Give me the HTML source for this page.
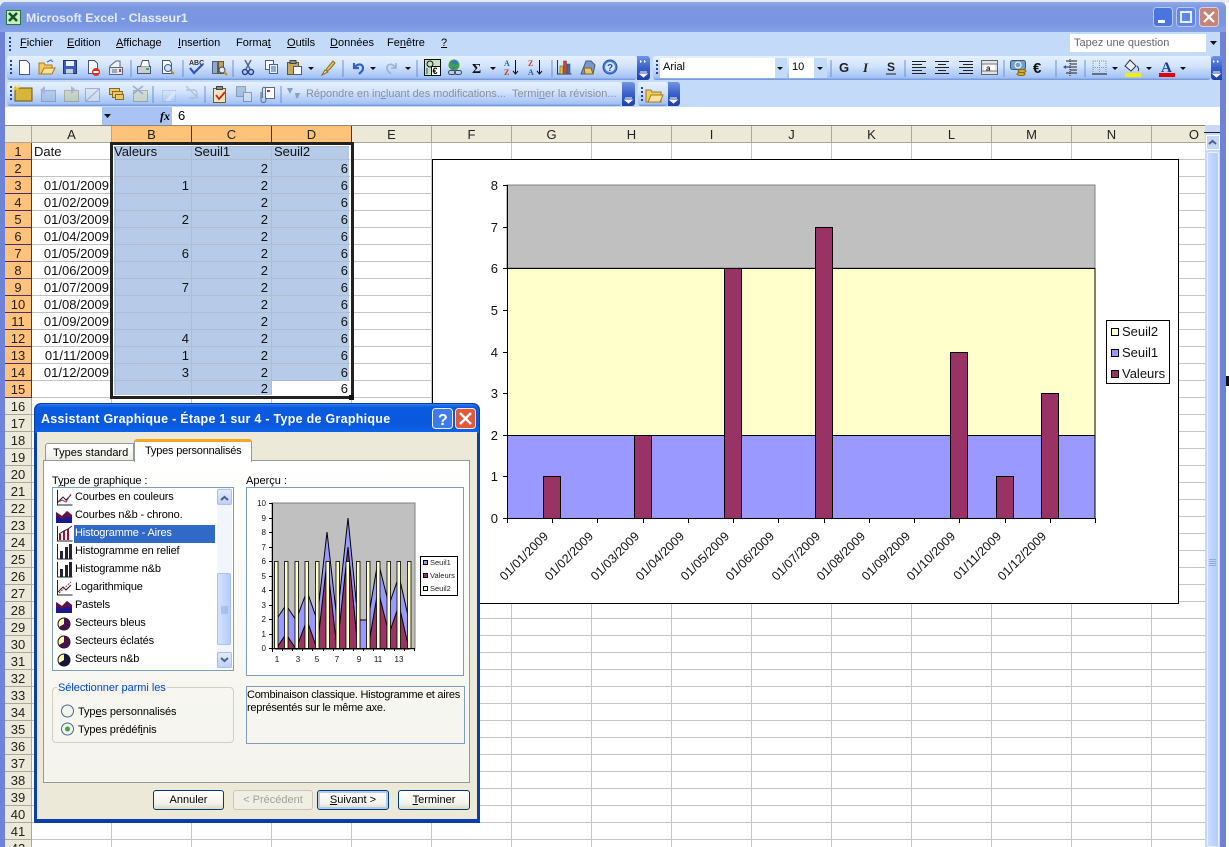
<!DOCTYPE html>
<html lang="fr"><head><meta charset="utf-8"><title>Microsoft Excel - Classeur1</title>
<style>
html,body{margin:0;padding:0;background:#fff}
#p{position:relative;width:1229px;height:847px;overflow:hidden;background:#fff;font:11px "Liberation Sans",sans-serif;color:#000}
#p div,#p span.a{position:absolute}
u{text-decoration:underline}
.t{position:absolute;white-space:nowrap;line-height:14px}
.tb{position:absolute;height:24px;background:linear-gradient(#e6f0fe,#d3e4fc 40%,#a3c2f5 90%,#6f8fd8);border-radius:3px}
.ov{background:linear-gradient(#7094e6,#3a60c8 50%,#1f3fa8)}
.h{background:#ece9d8;border-right:1px solid #aca899;border-bottom:1px solid #aca899;text-align:center;font-size:13px;line-height:17px;box-sizing:border-box;color:#222}
.ch{top:126px;height:17px;width:80px}
.rh{left:5px;width:27px;height:17px}
.s{background:#ffc27a;border-color:#4b2d6e}
.c{font-size:13px;line-height:17px;height:17px;white-space:nowrap;color:#111}
.r{text-align:right;width:76px}
.d{left:32px;width:77px;text-align:right}
.b{left:112px;width:77px;text-align:right}
.x{left:192px}.y{left:272px}
.li{left:75px;font-size:11px;line-height:14px;white-space:nowrap;letter-spacing:-.15px}
.btn{position:absolute;top:790px;height:20px;box-sizing:border-box;border:1px solid #003c74;border-radius:3px;background:linear-gradient(#fff,#f3f2ea 70%,#dcd8c8);text-align:center;line-height:18px;font-size:11px}
</style></head><body><div id="p">

<!-- window chrome -->
<div style="left:0;top:0;width:1229px;height:3px;background:#e8eaf2"></div>
<div style="left:0;top:2px;width:1226px;height:30px;background:linear-gradient(#8fa8e8,#7a97e0 20%,#7996e2 70%,#86a1e6);border-radius:5px 5px 0 0"></div>
<div style="left:0;top:32px;width:1226px;height:815px;background:#6e83d8"></div>
<div style="left:5px;top:32px;width:1215px;height:75px;background:#c3daf9"></div>
<div class="t" style="left:26px;top:11px;color:#e4eafc;font-weight:bold;font-size:12.4px">Microsoft Excel - Classeur1</div>
<svg style="position:absolute;left:6px;top:10px" width="16" height="16"><rect x=".5" y=".5" width="14" height="14" fill="#cfe8c8" stroke="#1f7a35"/><path d="M3 3l8 8M11 3l-8 8" stroke="#0c5a1f" stroke-width="2.5"/></svg>
<svg style="position:absolute;left:1153px;top:6px" width="68" height="23">
<rect x=".5" y="1.500" width="19" height="19" rx="3" fill="#4a75dc" stroke="#b8c8f0"/><rect x="5" y="14" width="7" height="3" fill="#fff"/>
<rect x="23.500" y="1.500" width="19" height="19" rx="3" fill="#5f88e4" stroke="#b8c8f0"/><rect x="28" y="6" width="10" height="10" fill="none" stroke="#e8eeff" stroke-width="2"/>
<rect x="46.500" y="1.500" width="19" height="19" rx="3" fill="#c98478" stroke="#d8d0dc"/><path d="M51 6l10 10M61 6l-10 10" stroke="#fff" stroke-width="2.200"/>
</svg>

<!-- menu -->
<svg style="position:absolute;left:8px;top:36px" width="4" height="16"><path d="M1 1h2v2H1zM1 5h2v2H1zM1 9h2v2H1zM1 13h2v2H1z" fill="#27418f"/></svg>
<div class="t" style="left:20px;top:36px"><u>F</u>ichier</div>
<div class="t" style="left:67px;top:36px"><u>E</u>dition</div>
<div class="t" style="left:116px;top:36px"><u>A</u>ffichage</div>
<div class="t" style="left:178px;top:36px"><u>I</u>nsertion</div>
<div class="t" style="left:236px;top:36px">Forma<u>t</u></div>
<div class="t" style="left:287px;top:36px"><u>O</u>utils</div>
<div class="t" style="left:330px;top:36px"><u>D</u>onnées</div>
<div class="t" style="left:387px;top:36px">Fe<u>n</u>être</div>
<div class="t" style="left:441px;top:36px"><u>?</u></div>
<div style="left:1070px;top:34px;width:136px;height:18px;background:#fff"></div>
<div style="left:1207px;top:34px;width:12px;height:18px;background:#c3daf9"></div>
<div class="t" style="left:1074px;top:36px;color:#666">Tapez une question</div>
<svg style="position:absolute;left:1210px;top:41px" width="7" height="5"><path d="M0 0h7L3.500 4z" fill="#111"/></svg>

<!-- toolbars -->
<div class="tb" style="left:7px;top:56px;width:630px"></div>
<div class="ov" style="left:637px;top:56px;width:13px;height:24px;border-radius:0 3px 3px 0"></div>
<div class="tb" style="left:653px;top:56px;width:558px"></div>
<div class="ov" style="left:1211px;top:56px;width:11px;height:24px;border-radius:3px 0 0 3px"></div>
<div class="tb" style="left:7px;top:82px;width:615px"></div>
<div class="ov" style="left:622px;top:82px;width:13px;height:24px;border-radius:0 3px 3px 0"></div>
<div class="tb" style="left:638px;top:82px;width:30px"></div>
<div class="ov" style="left:668px;top:82px;width:12px;height:24px;border-radius:0 3px 3px 0"></div>

<div style="left:660px;top:58px;width:115px;height:20px;background:#fff"></div>
<div style="left:775px;top:58px;width:12px;height:20px;background:#c3daf9"></div>
<div style="left:789px;top:58px;width:25px;height:20px;background:#fff"></div>
<div style="left:814px;top:58px;width:13px;height:20px;background:#c3daf9"></div>
<div class="t" style="left:663px;top:60px">Arial</div>
<div class="t" style="left:792px;top:60px">10</div>
<div class="t" style="left:306px;top:87px;color:#8a8f9a;letter-spacing:-.05px">Répondre en in<u>c</u>luant des modifications...</div>
<div class="t" style="left:512px;top:87px;color:#8a8f9a">Termi<u>n</u>er la révision...</div>

<svg style="position:absolute;left:0;top:0" width="1229" height="110">
<!-- grips -->
<path d="M10 60h2v2h-2zM10 64h2v2h-2zM10 68h2v2h-2zM10 72h2v2h-2zM10 86h2v2h-2zM10 90h2v2h-2zM10 94h2v2h-2zM10 98h2v2h-2zM656 60h2v2h-2zM656 64h2v2h-2zM656 68h2v2h-2zM656 72h2v2h-2zM641 87h2v2h-2zM641 91h2v2h-2zM641 95h2v2h-2zM641 99h2v2h-2z" fill="#27418f"/>
<!-- separators -->
<path d="M131 60v17M183 60v17M233 60v17M343 60v17M417 60v17M552 60v17M831 60v17M905 60v17M1004 60v17M1056 60v17M1085 60v17M153 86v17M205 86v17M281 86v17" stroke="#6f8fd0"/>
<!-- overflow marks -->
<path d="M640 72h7M640 74l3.500 3 3.500-3zM1213 72h7M1213 74l3.500 3 3.500-3zM625 98h7M625 100l3.500 3 3.500-3zM670 98h7M670 100l3.500 3 3.500-3z" stroke="#fff" fill="#fff"/>
<path d="M640 60l2 1.500-2 1.500zM644 60l2 1.500-2 1.500zM1213 60l2 1.500-2 1.500zM1217 60l2 1.500-2 1.500z" fill="#fff"/>
<!-- dropdown arrows -->
<path d="M308 67h6l-3 3zM370 67h6l-3 3zM405 67h6l-3 3zM490 67h6l-3 3zM777 67h6l-3 3zM817 67h6l-3 3zM1112 67h6l-3 3zM1146 67h6l-3 3zM1180 67h6l-3 3z" fill="#111"/>
<!-- new -->
<path d="M19.500 60.500h7l3 3v11h-10z" fill="#fff" stroke="#46597c"/>
<!-- open -->
<path d="M39 63h5l1 2h7v9H39z" fill="#f5c860" stroke="#a8791c"/><path d="M41 74l3-6h11l-3 6z" fill="#fbe29a" stroke="#a8791c"/><path d="M47 62l4-2 2 2" fill="none" stroke="#3a6ab0"/>
<!-- save -->
<rect x="63.500" y="60.500" width="13" height="13" fill="#3a5fb8" stroke="#1d3580"/><rect x="66" y="61" width="8" height="5" fill="#e8eefa"/><rect x="66" y="69" width="7" height="4.500" fill="#c8cfdf"/>
<!-- permission -->
<path d="M88.500 60.500h6l3 3v10h-9z" fill="#fff" stroke="#46597c"/><circle cx="96" cy="72" r="4" fill="#d8341c"/><rect x="93.500" y="71" width="5" height="2" fill="#fff"/>
<!-- mail -->
<path d="M110 66l6-5h4v13h-10z" fill="#eef1f6" stroke="#59678a"/><rect x="109.500" y="67.500" width="13" height="7" fill="#dfe5ef" stroke="#59678a"/><path d="M112 70h5M112 72h5" stroke="#667"/><rect x="119" y="69" width="2" height="3" fill="#c43"/>
<!-- print -->
<rect x="137.500" y="66.500" width="13" height="7" fill="#c8cdd6" stroke="#4b5568"/><path d="M140.500 66.500l2-6h6l1 6" fill="#fff" stroke="#4b5568"/><rect x="146" y="68" width="3" height="2" fill="#3bb04a"/>
<!-- preview -->
<path d="M162.500 60.500h7l2 3v10h-9z" fill="#fff" stroke="#46597c"/><circle cx="168" cy="68" r="3.500" fill="#cfe4fa" stroke="#3d5c8f"/><path d="M171 71l3 3" stroke="#c08a25" stroke-width="2"/>
<!-- spell -->
<text x="189" y="65" font-size="7" font-weight="bold" fill="#333" font-family="Liberation Sans">ABC</text><path d="M190 68l4 5 9-9" fill="none" stroke="#2d55b8" stroke-width="2.200"/>
<!-- research -->
<rect x="212.500" y="61.500" width="5" height="12" fill="#8ea8c8" stroke="#50627e"/><rect x="218.500" y="61.500" width="5" height="12" fill="#b8a068" stroke="#66582f"/><circle cx="222" cy="70" r="3" fill="#dfeafa" stroke="#445"/><path d="M224 72l3 3" stroke="#c08a25" stroke-width="2"/>
<!-- cut -->
<path d="M245 60l5 9M251 60l-5 9" stroke="#5a6680" stroke-width="1.500"/><circle cx="245" cy="72" r="2.500" fill="none" stroke="#27408f" stroke-width="1.500"/><circle cx="251" cy="72" r="2.500" fill="none" stroke="#27408f" stroke-width="1.500"/>
<!-- copy -->
<rect x="265.500" y="60.500" width="8" height="9" fill="#fff" stroke="#41639a"/><rect x="269.500" y="64.500" width="8" height="9" fill="#e9f0fb" stroke="#41639a"/><path d="M271 67h5M271 69h5M271 71h5" stroke="#41639a"/>
<!-- paste -->
<rect x="287.500" y="62.500" width="11" height="12" fill="#c8a860" stroke="#6c5420"/><rect x="290" y="60.500" width="6" height="3" fill="#8a8f9a" stroke="#444"/><rect x="293.500" y="66.500" width="8" height="8" fill="#fff" stroke="#3e5d94"/>
<!-- brush -->
<path d="M324 73l4-6 5-6 2 2-5 6z" fill="#e8c45a" stroke="#8a6a1c"/><path d="M322 75l3-5 3 2z" fill="#f5e8b0" stroke="#8a6a1c"/>
<!-- undo / redo -->
<path d="M354 63v5h5M355 67c3-4 8-3 8 1 0 3-2 4-4 6" fill="none" stroke="#3460c0" stroke-width="2.200"/>
<path d="M396 63v5h-5M395 67c-3-4-8-3-8 1 0 3 2 4 4 6" fill="none" stroke="#9db4d8" stroke-width="1.800"/>
<!-- euro conv -->
<rect x="424.500" y="59.500" width="16" height="16" fill="#c8e0c0" stroke="#111"/><circle cx="430" cy="64" r="3" fill="none" stroke="#111"/><rect x="431.500" y="66.500" width="9" height="9" fill="#fff" stroke="#111"/><text x="432.500" y="74" font-size="9" font-weight="bold" font-family="Liberation Sans">€</text><path d="M427 68v6" stroke="#24a"/>
<!-- hyperlink -->
<circle cx="454" cy="65" r="5.500" fill="#3fa04a"/><path d="M451 62l4-2 3 3-3 2zM452 67h3v2h-2z" fill="#3d72cc"/><rect x="448.500" y="70.500" width="7" height="4" rx="2" fill="none" stroke="#445"/><rect x="454.500" y="70.500" width="7" height="4" rx="2" fill="none" stroke="#445"/>
<!-- sigma -->
<text x="472" y="73" font-size="14" font-weight="bold" font-family="Liberation Serif" fill="#111">Σ</text>
<!-- sort -->
<text x="504" y="66" font-size="8" font-weight="bold" fill="#2d55b8" font-family="Liberation Serif">A</text><text x="504" y="75" font-size="8" font-weight="bold" fill="#c0392b" font-family="Liberation Serif">Z</text><path d="M515.500 60v13M513 71l2.500 3 2.500-3" fill="none" stroke="#111"/>
<text x="528" y="66" font-size="8" font-weight="bold" fill="#c0392b" font-family="Liberation Serif">Z</text><text x="528" y="75" font-size="8" font-weight="bold" fill="#2d55b8" font-family="Liberation Serif">A</text><path d="M539.500 60v13M537 71l2.500 3 2.500-3" fill="none" stroke="#111"/>
<!-- chart -->
<path d="M557.500 60v14h14" fill="none" stroke="#333"/><rect x="560" y="66" width="3" height="8" fill="#e6c434" stroke="#444" stroke-width=".5"/><rect x="563.500" y="61" width="3" height="13" fill="#d8402c" stroke="#444" stroke-width=".5"/><rect x="567" y="64" width="3" height="10" fill="#3a6ac8" stroke="#444" stroke-width=".5"/>
<!-- drawing -->
<path d="M581 74l5-13h5l4 4-2 9z" fill="#7f97c8" stroke="#47587c"/><path d="M584 68h7l2 6h-8z" fill="#e8c870" stroke="#7a6420"/>
<!-- help -->
<circle cx="610" cy="67" r="7" fill="#4c82dc" stroke="#2850a8"/><circle cx="610" cy="67" r="5" fill="#d6e4fa"/><text x="607" y="71" font-size="10" font-weight="bold" fill="#2850a8" font-family="Liberation Sans">?</text>
<!-- G I S -->
<text x="839" y="72" font-size="13" font-weight="bold" font-family="Liberation Sans" fill="#222">G</text>
<text x="863" y="72" font-size="13" font-weight="bold" font-style="italic" font-family="Liberation Serif" fill="#222">I</text>
<text x="887" y="71" font-size="12" font-weight="bold" font-family="Liberation Sans" fill="#222">S</text><path d="M886 74h10" stroke="#222"/>
<!-- align -->
<path d="M912 61.500h14M912 64.500h10M912 67.500h14M912 70.500h10M912 73.500h14M935 61.500h14M938 64.500h8M935 67.500h14M938 70.500h8M935 73.500h14M959 61.500h14M963 64.500h10M959 67.500h14M963 70.500h10M959 73.500h14" stroke="#222"/>
<rect x="981.500" y="60.500" width="16" height="14" fill="#dfe4ea" stroke="#666"/><rect x="984" y="64" width="11" height="7" fill="#fff"/><text x="986" y="71" font-size="8" font-weight="bold" font-family="Liberation Sans" fill="#222">a</text><path d="M982 64h15M982 71h15" stroke="#777"/>
<!-- currency -->
<rect x="1010.500" y="60.500" width="15" height="9" rx="2" fill="#72a0cc" stroke="#3a5a80"/><circle cx="1018" cy="65" r="3" fill="none" stroke="#fff"/><ellipse cx="1022" cy="71" rx="4" ry="1.500" fill="#e0b030" stroke="#8a6a10"/><ellipse cx="1021" cy="74" rx="4" ry="1.500" fill="#e0b030" stroke="#8a6a10"/>
<text x="1033" y="73" font-size="15" font-weight="bold" font-family="Liberation Sans" fill="#111">€</text>
<!-- indent -->
<path d="M1066 61h11M1070 64h7M1066 67h11M1070 70h7M1066 73h11" stroke="#222"/><path d="M1070 59v18" stroke="#222" stroke-dasharray="1 1"/><path d="M1063 67l3-2v4z" fill="#2d55b8"/>
<!-- borders -->
<path d="M1093 61h13M1093 67.500h13M1093 61v12M1099.500 61v12M1106 61v12" stroke="#8a94a8" stroke-dasharray="1 1"/><path d="M1092 74h15" stroke="#111"/>
<!-- fill -->
<path d="M1130 60l6 6-5 5-6-5z" fill="#e8eef6" stroke="#334"/><path d="M1137 66c2 2 2 4 1 5" stroke="#334" fill="none"/><rect x="1125" y="73" width="16" height="4" fill="#f5f000"/>
<!-- font color -->
<text x="1161" y="72" font-size="15" font-weight="bold" font-family="Liberation Serif" fill="#1d3c8f">A</text><rect x="1159" y="73" width="16" height="4" fill="#e00000"/>
<!-- toolbar 2 -->
<path d="M15 88h17v13H15z" fill="#d8b43a" stroke="#6a5410"/><path d="M15 86l3 3M19 85v3M12 89h4" stroke="#f5e04a" stroke-width="1.500"/>
<g opacity=".55"><rect x="41.500" y="90.500" width="14" height="11" fill="#9db6d8" stroke="#687ea8"/><path d="M40 90l5-4v8z" fill="#7690c0"/>
<rect x="64.500" y="90.500" width="14" height="11" fill="#c8cc9a" stroke="#8a8c60"/><path d="M76 90l-5-4v8z" fill="#7690c0"/>
<rect x="85.500" y="88.500" width="14" height="13" fill="#dde4ee" stroke="#7a88a0"/><path d="M86 101l13-12" stroke="#7a88a0"/></g>
<rect x="109.500" y="88.500" width="10" height="6" fill="#e8c868" stroke="#8a6a20"/><rect x="112.500" y="91.500" width="10" height="6" fill="#e8c868" stroke="#8a6a20"/><rect x="115.500" y="94.500" width="8" height="5" fill="#e8c868" stroke="#8a6a20"/>
<g opacity=".55"><rect x="133.500" y="90.500" width="14" height="11" fill="#d8d8b0" stroke="#888860"/><path d="M133 86l10 8M143 86l-10 8" stroke="#687ea8" stroke-width="1.500"/>
<path d="M162.500 90.500h13v11h-13z" fill="none" stroke="#9aa" stroke-dasharray="2 1"/><path d="M165 101l9-10 2 2-6 8z" fill="#eef"/>
<path d="M186 90h8c4 0 4 8 0 8h-5M186 86l12 12" fill="none" stroke="#9aaabe" stroke-width="1.500"/></g>
<rect x="213.500" y="88.500" width="12" height="14" fill="#f6e4c0" stroke="#7a5a20"/><rect x="216.500" y="86.500" width="6" height="3" fill="#8a8f9a" stroke="#444"/><path d="M216 95l3 4 6-7" fill="none" stroke="#d02818" stroke-width="1.800"/>
<g opacity=".55"><rect x="236.500" y="86.500" width="9" height="10" fill="#8ea6cc" stroke="#56688c"/><rect x="243.500" y="92.500" width="8" height="9" fill="#dce4f0" stroke="#56688c"/></g>
<path d="M261 92v8a2.500 2.500 0 005 0v-11a1.800 1.800 0 00-3.600 0v9" fill="none" stroke="#5a6a88"/><rect x="265.500" y="87.500" width="9" height="11" fill="#fff" stroke="#58688a"/><path d="M267 91h3" stroke="#c33" stroke-width="2"/>
<path d="M287 88l3 6 3-6zM295 93h5l-2 5h-2" fill="#8aa0c0"/>
<!-- folder 2 -->
<path d="M646 90h5l1 2h9v10h-15z" fill="#f5c860" stroke="#a8791c"/><path d="M648 102l3-7h12l-3 7z" fill="#fbe29a" stroke="#a8791c"/>
</svg>

<!-- formula bar -->
<div style="left:5px;top:107px;width:1215px;height:18px;background:#fff"></div>
<div style="left:102px;top:107px;width:70px;height:18px;background:#a9c4f4"></div>
<svg style="position:absolute;left:104px;top:114px" width="8" height="5"><path d="M0 0h7L3.500 4z" fill="#111"/></svg>
<div class="t" style="left:160px;top:109px;font-family:'Liberation Serif';font-style:italic;font-weight:bold;font-size:12px">fx</div>
<div class="t" style="left:178px;top:109px;font-size:13px">6</div>

<!-- grid -->
<div style="left:5px;top:125px;width:1200px;height:722px;background-color:#fff;background-image:repeating-linear-gradient(to right,#c4c4c4 0,#c4c4c4 1px,transparent 1px,transparent 80px),repeating-linear-gradient(to bottom,#c4c4c4 0,#c4c4c4 1px,transparent 1px,transparent 17px);background-position:106px 0,0 17px"></div>
<div style="left:5px;top:125px;width:1200px;height:1px;background:#8a8778"></div>
<div style="left:5px;top:126px;width:1200px;height:17px;background:#ece9d8"></div>
<div class="h" style="left:5px;top:126px;width:27px;height:17px"></div>
<div class="h ch" style="left:32px">A</div>
<div class="h ch s" style="left:112px">B</div>
<div class="h ch s" style="left:192px">C</div>
<div class="h ch s" style="left:272px">D</div>
<div class="h ch" style="left:352px">E</div>
<div class="h ch" style="left:432px">F</div>
<div class="h ch" style="left:512px">G</div>
<div class="h ch" style="left:592px">H</div>
<div class="h ch" style="left:672px">I</div>
<div class="h ch" style="left:752px">J</div>
<div class="h ch" style="left:832px">K</div>
<div class="h ch" style="left:912px">L</div>
<div class="h ch" style="left:992px">M</div>
<div class="h ch" style="left:1072px">N</div>
<div class="h ch" style="left:1152px;width:53px;text-align:right;padding-right:6px;border-right:0">O</div>

<div class="h rh s" style="top:143px">1</div><div class="h rh s" style="top:160px">2</div><div class="h rh s" style="top:177px">3</div><div class="h rh s" style="top:194px">4</div><div class="h rh s" style="top:211px">5</div><div class="h rh s" style="top:228px">6</div><div class="h rh s" style="top:245px">7</div><div class="h rh s" style="top:262px">8</div><div class="h rh s" style="top:279px">9</div><div class="h rh s" style="top:296px">10</div><div class="h rh s" style="top:313px">11</div><div class="h rh s" style="top:330px">12</div><div class="h rh s" style="top:347px">13</div><div class="h rh s" style="top:364px">14</div><div class="h rh s" style="top:381px">15</div>
<div class="h rh" style="top:398px">16</div><div class="h rh" style="top:415px">17</div><div class="h rh" style="top:432px">18</div><div class="h rh" style="top:449px">19</div><div class="h rh" style="top:466px">20</div><div class="h rh" style="top:483px">21</div><div class="h rh" style="top:500px">22</div><div class="h rh" style="top:517px">23</div><div class="h rh" style="top:534px">24</div><div class="h rh" style="top:551px">25</div><div class="h rh" style="top:568px">26</div><div class="h rh" style="top:585px">27</div><div class="h rh" style="top:602px">28</div><div class="h rh" style="top:619px">29</div><div class="h rh" style="top:636px">30</div><div class="h rh" style="top:653px">31</div><div class="h rh" style="top:670px">32</div><div class="h rh" style="top:687px">33</div><div class="h rh" style="top:704px">34</div><div class="h rh" style="top:721px">35</div><div class="h rh" style="top:738px">36</div><div class="h rh" style="top:755px">37</div><div class="h rh" style="top:772px">38</div><div class="h rh" style="top:789px">39</div><div class="h rh" style="top:806px">40</div><div class="h rh" style="top:823px">41</div><div class="h rh" style="top:840px">42</div>

<!-- selection -->
<div style="left:113px;top:144px;width:236px;height:251px;background-color:#b5cbe8;background-image:repeating-linear-gradient(to right,#b0bccf 0,#b0bccf 1px,transparent 1px,transparent 80px),repeating-linear-gradient(to bottom,#b0bccf 0,#b0bccf 1px,transparent 1px,transparent 17px);background-position:78px 0,0 15px"></div>
<div style="left:272px;top:381px;width:77px;height:14px;background:#fff"></div>
<div style="left:110px;top:142px;width:238px;height:251px;border:3px solid #222;box-shadow:inset 0 0 0 1px #fff"></div>
<div style="left:349px;top:395px;width:5px;height:5px;background:#111"></div>

<!-- cells -->
<div class="c" style="left:34px;top:143px">Date</div>
<div class="c" style="left:114px;top:143px">Valeurs</div>
<div class="c" style="left:194px;top:143px">Seuil1</div>
<div class="c" style="left:274px;top:143px">Seuil2</div>
<div class="c d" style="top:177px">01/01/2009</div><div class="c d" style="top:194px">01/02/2009</div><div class="c d" style="top:211px">01/03/2009</div><div class="c d" style="top:228px">01/04/2009</div><div class="c d" style="top:245px">01/05/2009</div><div class="c d" style="top:262px">01/06/2009</div><div class="c d" style="top:279px">01/07/2009</div><div class="c d" style="top:296px">01/08/2009</div><div class="c d" style="top:313px">01/09/2009</div><div class="c d" style="top:330px">01/10/2009</div><div class="c d" style="top:347px">01/11/2009</div><div class="c d" style="top:364px">01/12/2009</div>
<div class="c b" style="top:177px">1</div><div class="c b" style="top:211px">2</div><div class="c b" style="top:245px">6</div><div class="c b" style="top:279px">7</div><div class="c b" style="top:330px">4</div><div class="c b" style="top:347px">1</div><div class="c b" style="top:364px">3</div>
<div class="c r x" style="top:160px">2</div><div class="c r x" style="top:177px">2</div><div class="c r x" style="top:194px">2</div><div class="c r x" style="top:211px">2</div><div class="c r x" style="top:228px">2</div><div class="c r x" style="top:245px">2</div><div class="c r x" style="top:262px">2</div><div class="c r x" style="top:279px">2</div><div class="c r x" style="top:296px">2</div><div class="c r x" style="top:313px">2</div><div class="c r x" style="top:330px">2</div><div class="c r x" style="top:347px">2</div><div class="c r x" style="top:364px">2</div><div class="c r x" style="top:380px">2</div>
<div class="c r y" style="top:160px">6</div><div class="c r y" style="top:177px">6</div><div class="c r y" style="top:194px">6</div><div class="c r y" style="top:211px">6</div><div class="c r y" style="top:228px">6</div><div class="c r y" style="top:245px">6</div><div class="c r y" style="top:262px">6</div><div class="c r y" style="top:279px">6</div><div class="c r y" style="top:296px">6</div><div class="c r y" style="top:313px">6</div><div class="c r y" style="top:330px">6</div><div class="c r y" style="top:347px">6</div><div class="c r y" style="top:364px">6</div><div class="c r y" style="top:380px">6</div>

<!-- scrollbar -->
<div style="left:1205px;top:125px;width:15px;height:722px;background:#c6d8fb"></div>
<div style="left:1206px;top:135px;width:14px;height:15px;background:#c4d6f8;border:1px solid #fff;box-sizing:border-box"></div>
<svg style="position:absolute;left:1208px;top:139px" width="9" height="7"><path d="M1 5l3.500-3 3.500 3" fill="none" stroke="#4d6185" stroke-width="2"/></svg>
<div style="left:1207px;top:152px;width:12px;height:695px;background:linear-gradient(90deg,#c8daff,#b4ccf8);border:1px solid #e8eeff;box-sizing:border-box;border-radius:2px"></div>
<svg style="position:absolute;left:1209px;top:559px" width="8" height="8"><path d="M0 .5h7M0 2.500h7M0 4.500h7M0 6.500h7" stroke="#8eaadf"/></svg>
<div style="left:1204px;top:132px;width:16px;height:1px;background:#222"></div>
<div style="left:1222px;top:32px;width:4px;height:815px;background:#6e83d8"></div>
<div style="left:1226px;top:32px;width:3px;height:815px;background:#fff"></div>
<div style="left:1226px;top:376px;width:3px;height:10px;background:#111"></div>

<!-- chart -->
<svg style="position:absolute;left:432px;top:159px" width="747" height="445" viewBox="432 159 747 445">
<rect x="432.500" y="159.500" width="746" height="444" fill="#fff" stroke="#000"/>
<rect x="507" y="185" width="588" height="83" fill="#c0c0c0" stroke="#808080"/>
<rect x="507.500" y="268.500" width="587.500" height="167" fill="#ffffcc" stroke="#000"/>
<rect x="507.500" y="435.500" width="587.500" height="83" fill="#9999ff" stroke="#000"/>
<g fill="#993366" stroke="#000"><rect x="543.500" y="476.500" width="17" height="42"/><rect x="634.500" y="435.500" width="17" height="83"/><rect x="724.500" y="268.500" width="17" height="250"/><rect x="815.500" y="227.500" width="17" height="291"/><rect x="950.500" y="352.500" width="17" height="166"/><rect x="996.500" y="476.500" width="17" height="42"/><rect x="1041.500" y="393.500" width="17" height="125"/></g>
<path d="M507.500 185v337M503 185.500h4M503 227.500h4M503 268.500h4M503 310.500h4M503 352.500h4M503 393.500h4M503 435.500h4M503 476.500h4M503 518.500h592M507.500 518v5M552.500 518v5M597.500 518v5M643.500 518v5M688.500 518v5M733.500 518v5M778.500 518v5M824.500 518v5M869.500 518v5M914.500 518v5M959.500 518v5M1005.500 518v5M1050.500 518v5M1095.500 518v5" stroke="#000" fill="none"/>
<g font-family="Liberation Sans" font-size="13" text-anchor="end" fill="#111">
<text x="498" y="190">8</text><text x="498" y="232">7</text><text x="498" y="273">6</text><text x="498" y="315">5</text><text x="498" y="357">4</text><text x="498" y="398">3</text><text x="498" y="440">2</text><text x="498" y="481">1</text><text x="498" y="523">0</text>
<g font-size="12.500">
<text transform="translate(549,537) rotate(-45)">01/01/2009</text>
<text transform="translate(594,537) rotate(-45)">01/02/2009</text>
<text transform="translate(640,537) rotate(-45)">01/03/2009</text>
<text transform="translate(685,537) rotate(-45)">01/04/2009</text>
<text transform="translate(730,537) rotate(-45)">01/05/2009</text>
<text transform="translate(775,537) rotate(-45)">01/06/2009</text>
<text transform="translate(821,537) rotate(-45)">01/07/2009</text>
<text transform="translate(866,537) rotate(-45)">01/08/2009</text>
<text transform="translate(911,537) rotate(-45)">01/09/2009</text>
<text transform="translate(956,537) rotate(-45)">01/10/2009</text>
<text transform="translate(1002,537) rotate(-45)">01/11/2009</text>
<text transform="translate(1047,537) rotate(-45)">01/12/2009</text>
</g></g>
<rect x="1106.500" y="320.500" width="63" height="63" fill="#fff" stroke="#000"/>
<rect x="1111.500" y="328.500" width="7" height="7" fill="#ffffcc" stroke="#000"/><rect x="1111.500" y="349.500" width="7" height="7" fill="#9999ff" stroke="#000"/><rect x="1111.500" y="370.500" width="7" height="7" fill="#993366" stroke="#000"/>
<g font-family="Liberation Sans" font-size="13" fill="#111"><text x="1122" y="336">Seuil2</text><text x="1122" y="357">Seuil1</text><text x="1122" y="378">Valeurs</text></g>
</svg>

<!-- dialog -->
<div style="left:34px;top:403px;width:446px;height:420px;background:#0a3ea8;border-radius:7px 7px 0 0"></div>
<div style="left:35px;top:404px;width:444px;height:29px;background:linear-gradient(#2e7df0,#0a5ae0 12%,#0a58dc 70%,#0b64ea);border-radius:7px 7px 0 0"></div>
<div style="left:37px;top:432px;width:440px;height:387px;background:#ece9d8"></div>
<div class="t" style="left:41px;top:412px;color:#fff;font-weight:bold;font-size:12.5px;letter-spacing:.27px">Assistant Graphique - Étape 1 sur 4 - Type de Graphique</div>
<svg style="position:absolute;left:431px;top:407px" width="46" height="24">
<rect x="1.500" y="1.500" width="20" height="20" rx="3" fill="#3f7ce8" stroke="#e8f0ff"/><text x="7" y="18" font-size="16" font-weight="bold" fill="#fff" font-family="Liberation Sans">?</text>
<rect x="24.500" y="1.500" width="20" height="20" rx="3" fill="#e0593a" stroke="#f6e8e0"/><path d="M29 6l11 11M40 6L29 17" stroke="#fff" stroke-width="2.400"/>
</svg>
<!-- tabs -->
<div style="left:43px;top:460px;width:425px;height:321px;background:linear-gradient(#fff,#f4f3ec);border:1px solid #919b9c"></div>
<div style="left:45px;top:443px;width:89px;height:17px;background:linear-gradient(#fff,#ecebe2);border:1px solid #919b9c;border-bottom:0;border-radius:3px 0 0 0;box-sizing:border-box"></div>
<div style="left:134px;top:439px;width:118px;height:23px;background:#fff;border:1px solid #919b9c;border-top:3px solid #f6a623;border-bottom:0;border-radius:3px 3px 0 0;box-sizing:border-box"></div>
<div class="t" style="left:53px;top:446px">Types standard</div>
<div class="t" style="left:145px;top:444px;letter-spacing:-.2px">Types personnalisés</div>
<div class="t" style="left:52px;top:474px;letter-spacing:-.1px">T<u>y</u>pe de graphique :</div>
<div class="t" style="left:246px;top:474px">Aperçu :</div>
<!-- list -->
<div style="left:52px;top:487px;width:180px;height:182px;background:#fff;border:1px solid #7f9db9"></div>
<div style="left:74px;top:525px;width:141px;height:18px;background:#3169c6"></div>
<div class="li a t" style="top:490px">Courbes en couleurs</div>
<div class="li a t" style="top:508px">Courbes n&amp;b - chrono.</div>
<div class="li a t" style="top:526px;color:#fff">Histogramme - Aires</div>
<div class="li a t" style="top:544px">Histogramme en relief</div>
<div class="li a t" style="top:562px">Histogramme n&amp;b</div>
<div class="li a t" style="top:580px">Logarithmique</div>
<div class="li a t" style="top:598px">Pastels</div>
<div class="li a t" style="top:616px">Secteurs bleus</div>
<div class="li a t" style="top:634px">Secteurs éclatés</div>
<div class="li a t" style="top:652px">Secteurs n&amp;b</div>
<svg style="position:absolute;left:55px;top:489px" width="19" height="180">
<path d="M2.500 1v15h15M3 13l5-5 3 3 5-5" fill="none" stroke="#223"/><path d="M3 13l4-2 4 2 5-8" fill="none" stroke="#a03050"/>
<path d="M1 23l6 4 5-5 5 4v8H1z" fill="#1a1a8c"/><path d="M1 23l6 4 5-5 5 4v3l-5-2-5 3-6-3z" fill="#6a1040"/>
<path d="M2.500 37v15h15" fill="none" stroke="#223"/><path d="M5 51v-6M9 51v-9M13 51v-11" stroke="#a01030" stroke-width="2"/><path d="M4 45l5-3 4-2 4-3" fill="none" stroke="#223"/>
<path d="M2.500 55v15h15" fill="none" stroke="#223"/><rect x="5" y="62" width="3" height="8" fill="#223"/><rect x="10" y="58" width="3" height="12" fill="#223"/><rect x="14" y="55" width="3" height="15" fill="#223"/>
<path d="M2.500 73v15h15" fill="none" stroke="#223"/><rect x="5" y="80" width="3" height="8" fill="#223"/><rect x="10" y="76" width="3" height="12" fill="#223"/><rect x="14" y="73" width="3" height="15" fill="#223"/>
<path d="M2.500 91v15h15M3 103l5-5 3 3 5-5" fill="none" stroke="#223"/><path d="M4 104l12-11" stroke="#a03050" stroke-dasharray="2 1"/>
<path d="M1 113l6 4 5-5 5 4v8H1z" fill="#1a1a8c"/><path d="M1 113l6 4 5-5 5 4v3l-5-2-5 3-6-3z" fill="#6a1040"/>
<circle cx="9" cy="135" r="6" fill="#ffffb0" stroke="#111"/><path d="M9 135V129a6 6 0 010 12 6 6 0 01-5-3z" fill="#4a1050"/>
<circle cx="9" cy="153" r="6" fill="#ffffb0" stroke="#111"/><path d="M9 153V147a6 6 0 010 12 6 6 0 01-5-3z" fill="#4a1050"/>
<circle cx="9" cy="171" r="6" fill="#ffffb0" stroke="#111"/><path d="M9 171V165a6 6 0 010 12 6 6 0 01-5-3z" fill="#16163a"/>
</svg>
<!-- list scrollbar -->
<div style="left:217px;top:488px;width:15px;height:180px;background:#f2f5fc"></div>
<div style="left:217px;top:489px;width:15px;height:16px;background:linear-gradient(#e2ecff,#bcd0f8);border:1px solid #a8c0ec;box-sizing:border-box;border-radius:2px"></div>
<div style="left:217px;top:652px;width:15px;height:16px;background:linear-gradient(#e2ecff,#bcd0f8);border:1px solid #a8c0ec;box-sizing:border-box;border-radius:2px"></div>
<div style="left:217px;top:573px;width:14px;height:72px;background:linear-gradient(90deg,#d4e2ff,#b6ccf8);border:1px solid #a8c0ec;box-sizing:border-box;border-radius:2px"></div>
<svg style="position:absolute;left:218px;top:492px" width="13" height="174"><path d="M3 8l3.500-3 3.500 3M3 166l3.500 3 3.500-3" fill="none" stroke="#4d6185" stroke-width="2"/><path d="M3 115h7M3 117h7M3 119h7M3 121h7" stroke="#8eaadf"/></svg>
<!-- preview -->
<svg style="position:absolute;left:246px;top:487px" width="219" height="190" viewBox="246 487 219 190">
<rect x="246.500" y="487.500" width="217" height="188" fill="#fff" stroke="#7f9db9"/>
<rect x="272" y="503" width="143" height="146" fill="#c0c0c0" stroke="#808080"/>
<path d="M276 620L286 605 296 620 307 591 317 620 327 532 337 620 348 518 358 620 368 620 378 561 389 605 399 576 409 620V649H276z" fill="#9999ff" stroke="#000"/>
<path d="M276 649L286 634 296 649 307 620 317 649 327 561 337 649 348 547 358 649 368 649 378 590 389 634 399 605 409 649z" fill="#993366" stroke="#000"/>
<g fill="#ffffcc" stroke="#000" stroke-width=".8"><rect x="274.500" y="561.500" width="3.500" height="87"/><rect x="284.500" y="561.500" width="3.500" height="87"/><rect x="295" y="561.500" width="3.500" height="87"/><rect x="305" y="561.500" width="3.500" height="87"/><rect x="315.500" y="561.500" width="3.500" height="87"/><rect x="326" y="561.500" width="3.500" height="87"/><rect x="336" y="561.500" width="3.500" height="87"/><rect x="346" y="561.500" width="3.500" height="87"/><rect x="356.500" y="561.500" width="3.500" height="87"/><rect x="366.500" y="561.500" width="3.500" height="87"/><rect x="376.500" y="561.500" width="3.500" height="87"/><rect x="387" y="561.500" width="3.500" height="87"/><rect x="397" y="561.500" width="3.500" height="87"/><rect x="407.500" y="561.500" width="3.500" height="87"/></g>
<path d="M272.500 503v149M269 503.500h3M269 518.500h3M269 532.500h3M269 547.500h3M269 561.500h3M269 576.500h3M269 590.500h3M269 605.500h3M269 619.500h3M269 634.500h3M269 648.500h146M282.500 648v3M292.500 648v3M302.500 648v3M312.500 648v3M323.500 648v3M333.500 648v3M343.500 648v3M353.500 648v3M363.500 648v3M373.500 648v3M384.500 648v3M394.500 648v3M404.500 648v3M414.500 648v3" stroke="#000" fill="none"/>
<g font-family="Liberation Sans" font-size="8" fill="#111" text-anchor="end"><text x="266" y="506">10</text><text x="266" y="521">9</text><text x="266" y="535">8</text><text x="266" y="550">7</text><text x="266" y="564">6</text><text x="266" y="579">5</text><text x="266" y="593">4</text><text x="266" y="608">3</text><text x="266" y="622">2</text><text x="266" y="637">1</text><text x="266" y="651">0</text></g>
<g font-family="Liberation Sans" font-size="8" fill="#111" text-anchor="middle"><text x="277" y="662">1</text><text x="298" y="662">3</text><text x="317" y="662">5</text><text x="337" y="662">7</text><text x="359" y="662">9</text><text x="378" y="662">11</text><text x="399" y="662">13</text></g>
<rect x="420.500" y="556.500" width="37" height="39" fill="#fff" stroke="#000"/>
<rect x="423.500" y="560.500" width="4" height="4" fill="#9999ff" stroke="#000"/><rect x="423.500" y="573.500" width="4" height="4" fill="#993366" stroke="#000"/><rect x="423.500" y="586.500" width="4" height="4" fill="#ffffcc" stroke="#000"/>
<g font-family="Liberation Sans" font-size="7.500" fill="#222"><text x="430" y="565">Seuil1</text><text x="430" y="578">Valeurs</text><text x="430" y="591">Seuil2</text></g>
</svg>
<!-- group -->
<div style="left:52px;top:687px;width:180px;height:54px;border:1px solid #d0d0bf;border-radius:4px"></div>
<div class="t" style="left:57px;top:681px;background:#f4f3ec;padding:0 1px;color:#0046d5;letter-spacing:-.05px">Sélectionner parmi les</div>
<svg style="position:absolute;left:60px;top:703px" width="15" height="34">
<circle cx="7.500" cy="8" r="6" fill="#f4f4ee" stroke="#4a6a8a"/>
<circle cx="7.500" cy="26" r="6" fill="#f4f4ee" stroke="#4a6a8a"/><circle cx="7.500" cy="26" r="2.500" fill="#3aa846"/>
</svg>
<div class="t" style="left:78px;top:705px;letter-spacing:-.1px">Typ<u>e</u>s personnalisés</div>
<div class="t" style="left:78px;top:723px;letter-spacing:-.1px">Types prédéf<u>i</u>nis</div>
<!-- description -->
<div style="left:246px;top:686px;width:217px;height:56px;border:1px solid #7f9db9"></div>
<div class="t" style="left:247px;top:688px;letter-spacing:-.25px">Combinaison classique. Histogramme et aires</div>
<div class="t" style="left:247px;top:701px;letter-spacing:-.25px">représentés sur le même axe.</div>
<!-- buttons -->
<div class="btn" style="left:153px;width:71px">Annuler</div>
<div class="btn" style="left:233px;width:80px;border-color:#c9c7ba;background:#f0efe6;color:#a1a192">&lt; Précédent</div>
<div class="btn" style="left:317px;width:72px;box-shadow:inset 0 0 0 2px #b4c8f0"><u>S</u>uivant &gt;</div>
<div class="btn" style="left:398px;width:72px"><u>T</u>erminer</div>
</div></body></html>
